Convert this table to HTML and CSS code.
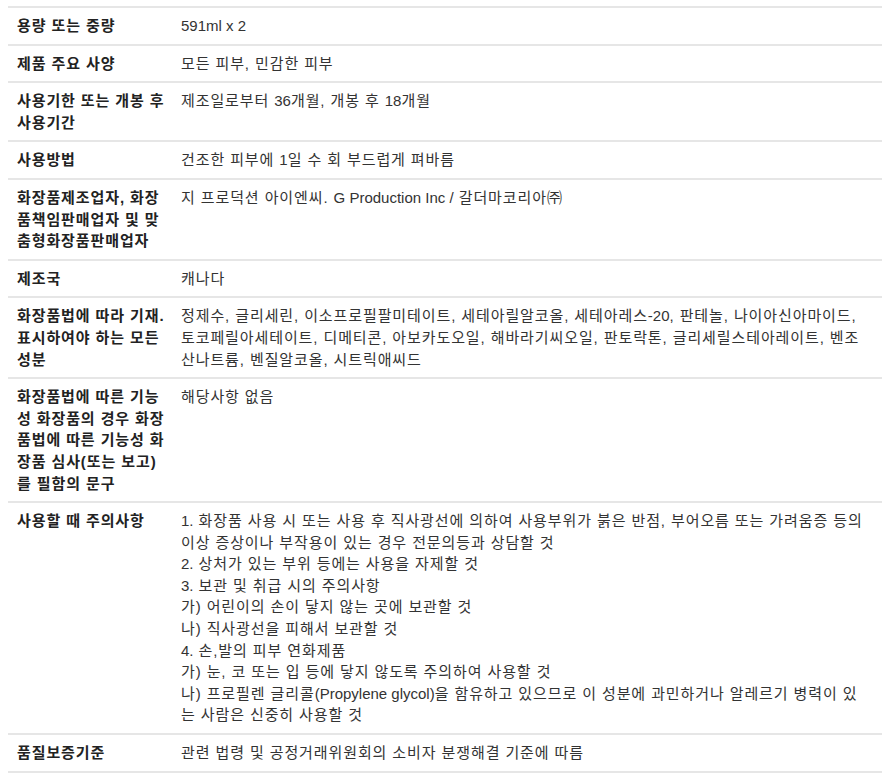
FILE: index.html
```html
<!DOCTYPE html>
<html lang="ko">
<head>
<meta charset="utf-8">
<title>상품정보 제공고시</title>
<link rel="stylesheet" href="styles.css">
</head>
<body>
<table class="info">
  <colgroup><col class="col-label"><col class="col-value"></colgroup>
  <tbody>
    <tr><th>용량 또는 중량</th><td><span class="en">591ml x 2</span></td></tr>
    <tr><th>제품 주요 사양</th><td>모든 피부, 민감한 피부</td></tr>
    <tr><th>사용기한 또는 개봉 후<br>사용기간</th><td>제조일로부터 <span class="en">36</span>개월, 개봉 후 <span class="en">18</span>개월</td></tr>
    <tr><th>사용방법</th><td>건조한 피부에 <span class="en">1</span>일 수 회 부드럽게 펴바름</td></tr>
    <tr><th>화장품제조업자, 화장<br>품책임판매업자 및 맞<br>춤형화장품판매업자</th><td>지 프로덕션 아이엔씨. <span class="en">G Production Inc /</span> 갈더마코리아㈜</td></tr>
    <tr><th>제조국</th><td>캐나다</td></tr>
    <tr><th>화장품법에 따라 기재.<br>표시하여야 하는 모든<br>성분</th><td>정제수, 글리세린, 이소프로필팔미테이트, 세테아릴알코올, 세테아레스<span class="en">-20</span>, 판테놀, 나이아신아마이드,<br>토코페릴아세테이트, 디메티콘, 아보카도오일, 해바라기씨오일, 판토락톤, 글리세릴스테아레이트, 벤조<br>산나트륨, 벤질알코올, 시트릭애씨드</td></tr>
    <tr><th>화장품법에 따른 기능<br>성 화장품의 경우 화장<br>품법에 따른 기능성 화<br>장품 심사(또는 보고)<br>를 필함의 문구</th><td>해당사항 없음</td></tr>
    <tr><th>사용할 때 주의사항</th><td><span class="en">1.</span> 화장품 사용 시 또는 사용 후 직사광선에 의하여 사용부위가 붉은 반점, 부어오름 또는 가려움증 등의<br>이상 증상이나 부작용이 있는 경우 전문의등과 상담할 것<br><span class="en">2.</span> 상처가 있는 부위 등에는 사용을 자제할 것<br><span class="en">3.</span> 보관 및 취급 시의 주의사항<br>가) 어린이의 손이 닿지 않는 곳에 보관할 것<br>나) 직사광선을 피해서 보관할 것<br><span class="en">4.</span> 손,발의 피부 연화제품<br>가) 눈, 코 또는 입 등에 닿지 않도록 주의하여 사용할 것<br>나) 프로필렌 글리콜<span class="en">(Propylene glycol)</span>을 함유하고 있으므로 이 성분에 과민하거나 알레르기 병력이 있<br>는 사람은 신중히 사용할 것</td></tr>
    <tr><th>품질보증기준</th><td>관련 법령 및 공정거래위원회의 소비자 분쟁해결 기준에 따름</td></tr>
  </tbody>
</table>
</body>
</html>
```
FILE: styles.css
```css
html, body {
  background: #ffffff;
}
body {
  margin: 6px 8px;
  font-family: "Liberation Sans", "Noto Sans CJK KR", sans-serif;
  font-size: 15px;
  line-height: 21.6px;
  color: #333333;
}
.info {
  width: 874px;
  border-collapse: collapse;
  table-layout: fixed;
}
.col-label {
  width: 164px;
}
.info tr {
  border-top: 2px solid #e6e6e6;
  border-bottom: 2px solid #e6e6e6;
}
.info th,
.info td {
  padding: 7px 9px 7px 9px;
  vertical-align: top;
  text-align: left;
  white-space: nowrap;
  letter-spacing: 0.9px;
}
.info th {
  font-weight: 700;
  color: #222222;
}
.info td {
  font-weight: 400;
}
.en {
  letter-spacing: 0;
}
```
